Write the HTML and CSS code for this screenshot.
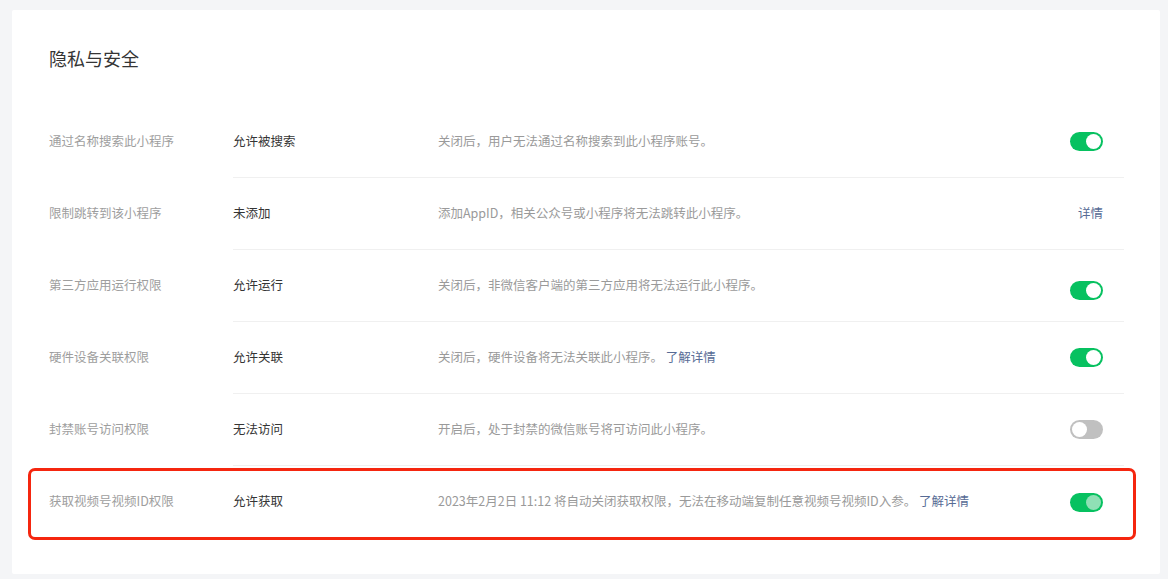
FILE: index.html
```html
<!DOCTYPE html>
<html lang="zh-CN">
<head>
<meta charset="utf-8">
<title>隐私与安全</title>
<link rel="stylesheet" href="styles.css">
</head>
<body>
<div class="page">
  <section class="card">
    <h2 class="title">隐私与安全</h2>
    <div class="list">
      <div class="row">
        <div class="label">通过名称搜索此小程序</div>
        <div class="body">
          <div class="value">允许被搜索</div>
          <div class="desc">关闭后，用户无法通过名称搜索到此小程序账号。</div>
          <div class="action"><span class="switch on"><span class="knob"></span></span></div>
        </div>
      </div>
      <div class="row">
        <div class="label">限制跳转到该小程序</div>
        <div class="body">
          <div class="value">未添加</div>
          <div class="desc">添加AppID，相关公众号或小程序将无法跳转此小程序。</div>
          <div class="action"><a class="link" href="#">详情</a></div>
        </div>
      </div>
      <div class="row">
        <div class="label">第三方应用运行权限</div>
        <div class="body">
          <div class="value">允许运行</div>
          <div class="desc">关闭后，非微信客户端的第三方应用将无法运行此小程序。</div>
          <div class="action shifted"><span class="switch on"><span class="knob"></span></span></div>
        </div>
      </div>
      <div class="row">
        <div class="label">硬件设备关联权限</div>
        <div class="body">
          <div class="value">允许关联</div>
          <div class="desc">关闭后，硬件设备将无法关联此小程序。 <a class="link" href="#">了解详情</a></div>
          <div class="action"><span class="switch on"><span class="knob"></span></span></div>
        </div>
      </div>
      <div class="row">
        <div class="label">封禁账号访问权限</div>
        <div class="body">
          <div class="value">无法访问</div>
          <div class="desc">开启后，处于封禁的微信账号将可访问此小程序。</div>
          <div class="action"><span class="switch off"><span class="knob"></span></span></div>
        </div>
      </div>
      <div class="row row-last">
        <div class="label">获取视频号视频ID权限</div>
        <div class="body">
          <div class="value">允许获取</div>
          <div class="desc">2023年2月2日 11:12 将自动关闭获取权限，无法在移动端复制任意视频号视频ID入参。 <a class="link" href="#">了解详情</a></div>
          <div class="action"><span class="switch on faded"><span class="knob"></span></span></div>
        </div>
        <div class="highlight"></div>
      </div>
    </div>
  </section>
</div>
</body>
</html>
```
FILE: styles.css
```css
* { box-sizing: border-box; }
html, body {
  margin: 0;
  padding: 0;
  background: #f4f5f7;
  font-family: "Noto Sans CJK SC", "Noto Sans", "Liberation Sans", sans-serif;
}
.page {
  padding: 10px 8px 7px 12px;
}
.card {
  background: #ffffff;
  border-radius: 2px;
  padding: 36px 36px 36px 37px;
}
.title {
  margin: 0;
  font-size: 18px;
  line-height: 24px;
  font-weight: 400;
  color: #353535;
}
.list {
  margin-top: 36px;
}
.row {
  position: relative;
  display: flex;
  align-items: stretch;
  height: 72px;
  font-size: 12.5px;
  line-height: 16px;
}
.label {
  width: 184px;
  flex: none;
  display: flex;
  align-items: center;
  padding-bottom: 2px;
  color: #9e9e9e;
}
.body {
  flex: 1;
  display: flex;
  align-items: center;
  border-bottom: 1px solid #f0f0f0;
}
.row-last .body {
  border-bottom: none;
}
.value {
  width: 205px;
  flex: none;
  padding-bottom: 2px;
  color: #353535;
}
.desc {
  flex: 1;
  padding-bottom: 2px;
  color: #9a9a9a;
}
.link {
  color: #576b95;
  text-decoration: none;
}
.action {
  flex: none;
  width: 60px;
  padding-right: 21px;
  display: flex;
  justify-content: flex-end;
}
.action .link {
  padding-bottom: 2px;
}
.action.shifted {
  margin-top: 10px;
}
.switch {
  position: relative;
  display: block;
  width: 33px;
  height: 19px;
  border-radius: 10px;
  background: #07c160;
}
.switch.off {
  background: #c0c0c0;
}
.knob {
  position: absolute;
  top: 2px;
  width: 15px;
  height: 15px;
  border-radius: 50%;
  background: #ffffff;
}
.switch.on .knob { right: 2px; }
.switch.off .knob { left: 2px; }
.switch.faded .knob { background: #8fe0b5; }
.highlight {
  position: absolute;
  left: -21px;
  right: -12px;
  top: 2px;
  bottom: -2px;
  border: 3px solid #f5260f;
  border-radius: 7px;
  pointer-events: none;
}
```
